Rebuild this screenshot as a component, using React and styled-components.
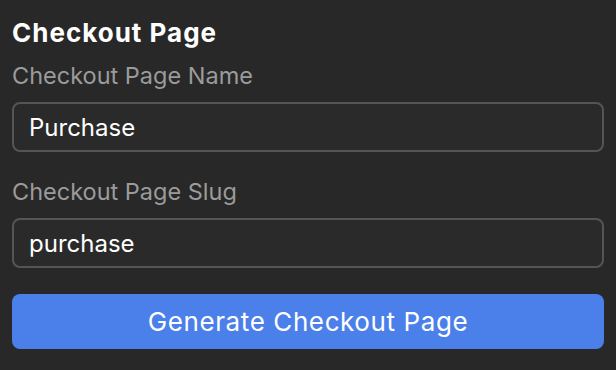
import React from 'react'
import styled, { createGlobalStyle } from 'styled-components'

const GlobalStyle = createGlobalStyle`
    html, body {
        margin : 0;
        padding : 0;
        background-color : #282828;
    }
    * {
        box-sizing : border-box;
        font-family : Inter, 'Noto Sans', sans-serif;
    }
`;

const Panel = styled.div`
    width : 616px;
    height : 370px;
    padding : 15px 12px 0 12px;
    display : flex;
    flex-direction : column;
`;

const Title = styled.h1`
    margin : 0;
    font-size : 26px;
    line-height : 35px;
    font-weight : 700;
    letter-spacing : 1px;
    color : #ffffff;
`;

const Field = styled.div`
    display : flex;
    flex-direction : column;
    margin-top : ${props => props.first ? '11px' : '25px'};
`;

const Label = styled.label`
    font-size : 23.5px;
    line-height : 30px;
    color : #9b9b9b;
    margin-bottom : 11px;
`;

const Input = styled.input`
    height : 50px;
    width : 592px;
    padding : 0 15px;
    border : 2px solid #555555;
    border-radius : 8px;
    background-color : #2a2a2a;
    color : #ffffff;
    font-size : 24px;
    &:focus {
        outline : none;
    }
`;

const Button = styled.button`
    margin-top : 26px;
    height : 55px;
    width : 592px;
    border : none;
    border-radius : 8px;
    background-color : #4b7fea;
    color : #ffffff;
    font-size : 26px;
    letter-spacing : 0.6px;
    font-weight : 400;
    cursor : pointer;
`;

const fields = [
    { label : "Checkout Page Name", value : "Purchase" },
    { label : "Checkout Page Slug", value : "purchase" }
]

const App = () => {

    return (
        <>
            <GlobalStyle />
            <Panel>
                <Title>Checkout Page</Title>
                {
                    fields.map( (field, i) => (
                        <Field key={field.label} first={i === 0}>
                            <Label>{field.label}</Label>
                            <Input type="text" defaultValue={field.value} />
                        </Field>
                    ))
                }
                <Button>Generate Checkout Page</Button>
            </Panel>
        </>
    )
}

export default App
